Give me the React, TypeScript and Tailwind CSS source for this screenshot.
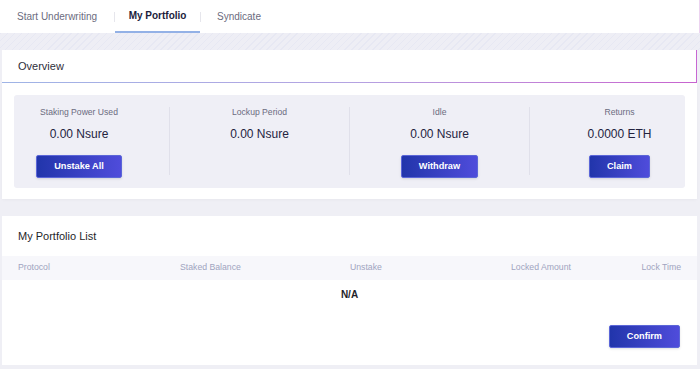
const stats = [
  { label: 'Staking Power Used', value: '0.00 Nsure', action: 'Unstake All' },
  { label: 'Lockup Period', value: '0.00 Nsure', action: '' },
  { label: 'Idle', value: '0.00 Nsure', action: 'Withdraw' },
  { label: 'Returns', value: '0.0000 ETH', action: 'Claim' },
];

const columns = ['Protocol', 'Staked Balance', 'Unstake', 'Locked Amount', 'Lock Time'];

function BlueButton({ children }: { children: string }) {
  return (
    <button className="h-[23px] px-[17px] rounded-[2px] bg-gradient-to-r from-[#2135ab] to-[#4f4cdb] border border-[#5b66d8] text-white text-[9.2px] font-bold leading-none shadow-sm">
      {children}
    </button>
  );
}

export default function App() {
  return (
    <div className="w-[700px] h-[369px] overflow-hidden bg-[#efeff5] font-['Liberation_Sans',Arial,sans-serif]">
      {/* Tabs */}
      <div className="h-[33px] bg-white flex items-stretch pl-[17px] border-r border-[#ecd3f0] text-[10px]">
        <div className="flex items-center text-[#6b6b7e]">Start Underwriting</div>
        <div className="w-px h-[10px] bg-[#e6e6ec] self-center ml-[17px]" />
        <div className="w-[85px] flex items-center justify-center font-bold text-[#1c1c3c] border-b-2 border-[#93b1e6]">
          My Portfolio
        </div>
        <div className="w-px h-[10px] bg-[#e6e6ec] self-center" />
        <div className="flex items-center pl-[16px] text-[#6b6b7e]">Syndicate</div>
      </div>

      {/* decorative band */}
      <div className="h-[17px] bg-[#eeeef5] bg-[repeating-linear-gradient(135deg,#e7e8f3_0px,#e7e8f3_1px,transparent_1px,transparent_5px)]" />

      {/* Overview */}
      <div className="ml-[2px] mr-[3px]">
        <div className="h-[33px] bg-white flex items-center pl-[16px] text-[11px] text-[#2e2e3a] border-r border-[#c767d2] relative">
          Overview
          <div className="absolute left-0 right-0 bottom-0 h-px bg-gradient-to-r from-[#9fb4e6] via-[#b4a3e2] to-[#c763cf]" />
        </div>
        <div className="bg-white px-[12px] pt-[12px] pb-[11px] shadow-[0_1px_3px_rgba(0,0,0,0.03)]">
          <div className="h-[93px] bg-[#efeff6] rounded-[3px] overflow-hidden">
            <div className="grid grid-cols-[180px_180px_180px_180px] -ml-[25px]">
              {stats.map((s, i) => (
                <div
                  key={s.label}
                  className={`my-[12px] h-[68px] flex flex-col items-center ${i > 0 ? 'border-l border-[#e0e0ea]' : ''}`}
                >
                  <div className="text-[8.6px] leading-[10px] text-[#6b6b80]">{s.label}</div>
                  <div className="mt-[10px] text-[12px] leading-[14px] text-[#23233f]">{s.value}</div>
                  {s.action && (
                    <div className="mt-[11px]">
                      <BlueButton>{s.action}</BlueButton>
                    </div>
                  )}
                </div>
              ))}
            </div>
          </div>
        </div>
      </div>

      <div className="h-[17px]" />

      {/* Portfolio list */}
      <div className="ml-[2px] mr-[3px] h-[149px] bg-white">
        <div className="h-[40px] flex items-center pl-[16px] text-[11px] font-medium text-[#1f1f2a]">My Portfolio List</div>
        <div className="h-[24px] bg-[#f7f7fb] grid grid-cols-[162px_170px_161px_130px_1fr] px-[16px] items-center text-[8.7px] text-[#a0a4c0]">
          {columns.map((c, i) => (
            <div key={c} className={i === columns.length - 1 ? 'text-right' : ''}>
              {c}
            </div>
          ))}
        </div>
        <div className="h-[28px] flex items-center justify-center text-[10px] font-bold text-[#1f1f2a]">N/A</div>
        <div className="flex justify-end pr-[17px] mt-[17px]">
          <BlueButton>Confirm</BlueButton>
        </div>
      </div>
    </div>
  );
}
